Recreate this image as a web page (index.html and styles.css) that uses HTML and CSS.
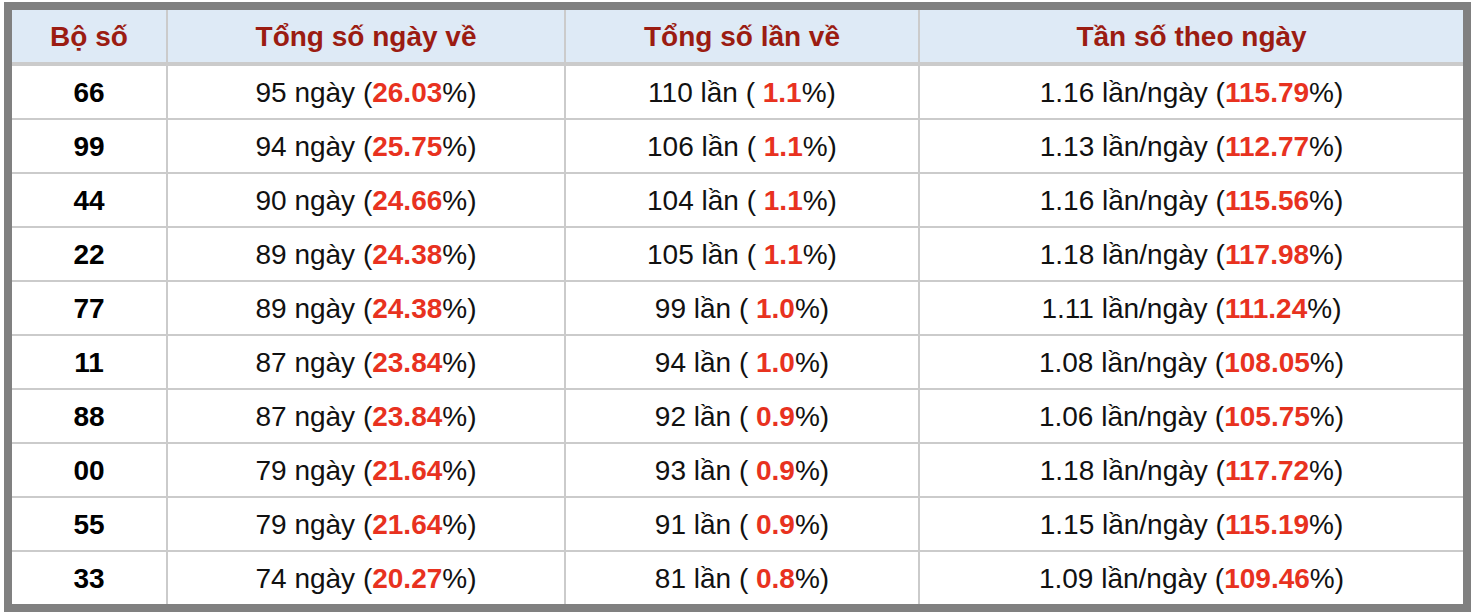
FILE: index.html
```html
<!DOCTYPE html>
<html lang="vi">
<head>
<meta charset="utf-8">
<title>Thống kê bộ số</title>
<link rel="stylesheet" href="styles.css">
</head>
<body>
<div class="frame">
  <table class="stats">
    <colgroup>
      <col class="c1"><col class="c2"><col class="c3"><col class="c4">
    </colgroup>
    <thead>
      <tr><th>Bộ số</th><th>Tổng số ngày về</th><th>Tổng số lần về</th><th>Tần số theo ngày</th></tr>
    </thead>
    <tbody>
      <tr><td class="num">66</td><td>95 ngày (<b>26.03</b>%)</td><td>110 lần ( <b>1.1</b>%)</td><td>1.16 lần/ngày (<b>115.79</b>%)</td></tr>
      <tr><td class="num">99</td><td>94 ngày (<b>25.75</b>%)</td><td>106 lần ( <b>1.1</b>%)</td><td>1.13 lần/ngày (<b>112.77</b>%)</td></tr>
      <tr><td class="num">44</td><td>90 ngày (<b>24.66</b>%)</td><td>104 lần ( <b>1.1</b>%)</td><td>1.16 lần/ngày (<b>115.56</b>%)</td></tr>
      <tr><td class="num">22</td><td>89 ngày (<b>24.38</b>%)</td><td>105 lần ( <b>1.1</b>%)</td><td>1.18 lần/ngày (<b>117.98</b>%)</td></tr>
      <tr><td class="num">77</td><td>89 ngày (<b>24.38</b>%)</td><td>99 lần ( <b>1.0</b>%)</td><td>1.11 lần/ngày (<b>111.24</b>%)</td></tr>
      <tr><td class="num">11</td><td>87 ngày (<b>23.84</b>%)</td><td>94 lần ( <b>1.0</b>%)</td><td>1.08 lần/ngày (<b>108.05</b>%)</td></tr>
      <tr><td class="num">88</td><td>87 ngày (<b>23.84</b>%)</td><td>92 lần ( <b>0.9</b>%)</td><td>1.06 lần/ngày (<b>105.75</b>%)</td></tr>
      <tr><td class="num">00</td><td>79 ngày (<b>21.64</b>%)</td><td>93 lần ( <b>0.9</b>%)</td><td>1.18 lần/ngày (<b>117.72</b>%)</td></tr>
      <tr><td class="num">55</td><td>79 ngày (<b>21.64</b>%)</td><td>91 lần ( <b>0.9</b>%)</td><td>1.15 lần/ngày (<b>115.19</b>%)</td></tr>
      <tr><td class="num">33</td><td>74 ngày (<b>20.27</b>%)</td><td>81 lần ( <b>0.8</b>%)</td><td>1.09 lần/ngày (<b>109.46</b>%)</td></tr>
    </tbody>
  </table>
</div>
</body>
</html>
```

FILE: styles.css
```css
html, body {
  margin: 0;
  padding: 0;
  background: #ffffff;
}

body {
  padding: 2px 3px 2px 4px;
  font-family: "Liberation Sans", Arial, Helvetica, sans-serif;
}

.frame {
  width: 1451px;
  border: 8px solid #808080;
  background: #ffffff;
}

.stats {
  width: 1451px;
  table-layout: fixed;
  border-collapse: separate;
  border-spacing: 0;
}

.stats .c1 { width: 156px; }
.stats .c2 { width: 398px; }
.stats .c3 { width: 354px; }
.stats .c4 { width: 543px; }

.stats th,
.stats td {
  padding: 1px 0 0;
  text-align: center;
  font-size: 28px;
  line-height: 51px;
  height: 51px;
  border-right: 2px solid #cbcbcb;
  border-bottom: 2px solid #cbcbcb;
  white-space: nowrap;
  color: #111111;
  font-weight: normal;
}

.stats th:last-child,
.stats td:last-child {
  border-right: none;
}

.stats tbody tr:last-child td {
  border-bottom: none;
}

.stats th {
  background: #deeaf6;
  color: #9b1c12;
  font-weight: bold;
  border-bottom: 4px solid #cbcbcb;
}

.stats td.num {
  font-weight: bold;
  color: #000000;
}

.stats td b {
  color: #e8321f;
  font-weight: bold;
}
```
